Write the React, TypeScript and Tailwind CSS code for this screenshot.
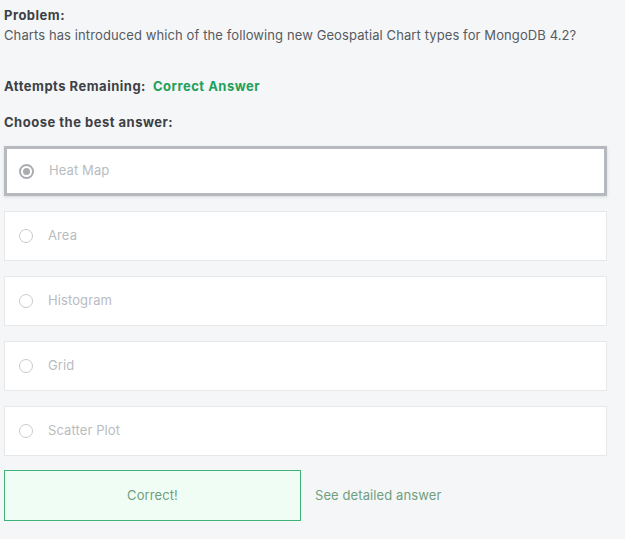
import React from 'react';

const OPTIONS = ['Heat Map', 'Area', 'Histogram', 'Grid', 'Scatter Plot'];

export default function App() {
  return (
    <div
      className="min-h-[539px] w-full bg-[#f5f6f8] px-1 pt-[7px] text-[13px] tracking-[0.1px] text-[#555b60]"
      style={{ fontFamily: 'Inter, "Liberation Sans", sans-serif' }}
    >
      {/* Problem */}
      <div className="font-bold tracking-[0.5px] text-[#3d4145] leading-[17px]">Problem:</div>
      <div className="mt-[1px] leading-[20px]">
        Charts has introduced which of the following new Geospatial Chart types for MongoDB 4.2?
      </div>

      <div className="mt-[33px] flex gap-[7px] font-bold tracking-[0.5px] leading-[17px]">
        <span className="text-[#3d4145]">Attempts Remaining:</span>
        <span className="text-[#21a05a]">Correct Answer</span>
      </div>

      <div className="mt-[19px] font-bold tracking-[0.5px] text-[#3d4145] leading-[17px]">
        Choose the best answer:
      </div>

      {/* Options */}
      <div className="mt-[15px] flex w-[603px] flex-col gap-[15px]">
        {OPTIONS.map((opt, i) => {
          const selected = i === 0;
          return (
            <div
              key={opt}
              className={
                selected
                  ? 'flex h-[50px] items-center border-[3px] border-[#b6babe] bg-white pl-[12px] shadow-[0_1px_3px_rgba(0,0,0,0.12)]'
                  : 'flex h-[50px] items-center border border-[#e6e8ea] bg-white pl-[14px]'
              }
            >
              {selected ? (
                <span className="flex h-[15px] w-[15px] items-center justify-center rounded-full border-2 border-[#a9adb1]">
                  <span className="h-[7px] w-[7px] rounded-full bg-[#a9adb1]" />
                </span>
              ) : (
                <span className="h-[14px] w-[14px] rounded-full border border-[#c8cbce]" />
              )}
              <span className="ml-[15px] text-[#b9bcbf]">{opt}</span>
            </div>
          );
        })}
      </div>

      {/* Result */}
      <div className="mt-[14px] flex items-center">
        <div className="flex h-[51px] w-[297px] items-center justify-center border border-[#3fb27a] bg-[#effdf4] text-[#6f9f80]">
          Correct!
        </div>
        <span className="ml-[14px] text-[#6f9f80]">See detailed answer</span>
      </div>
    </div>
  );
}
